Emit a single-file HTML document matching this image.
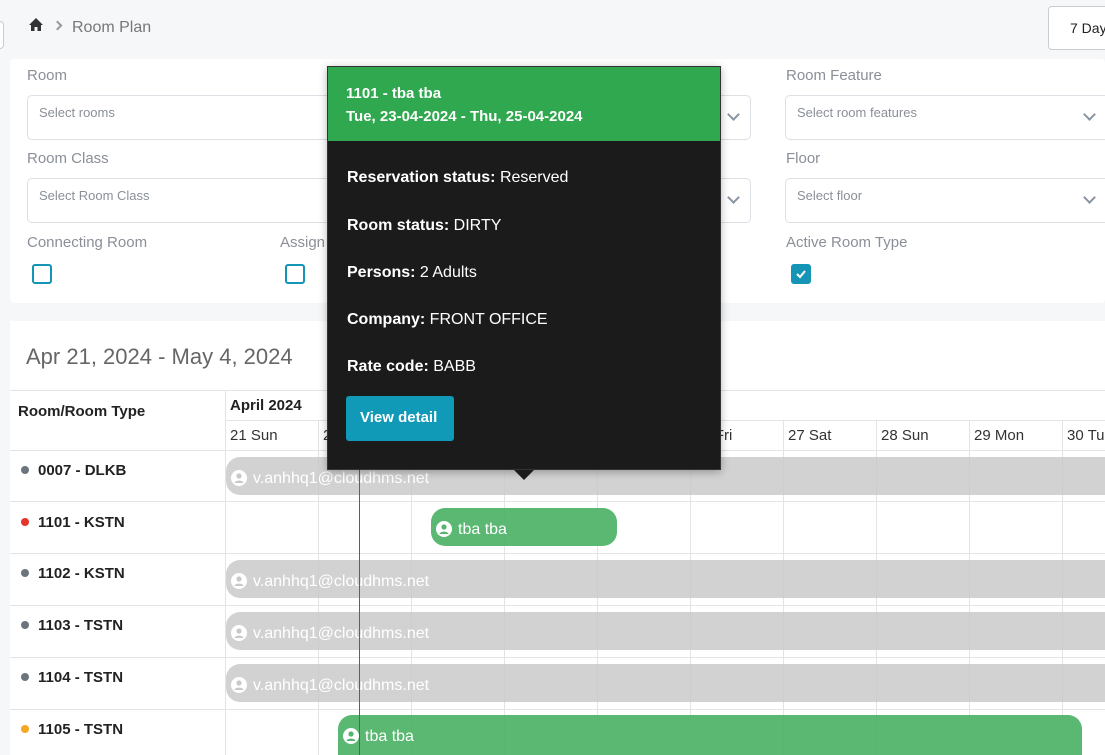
<!DOCTYPE html>
<html style="overflow:hidden;width:1105px;height:755px"><head><meta charset="utf-8"><style>
*{box-sizing:border-box;margin:0;padding:0}
body{width:1105px;height:755px;overflow:hidden;background:#f6f7f9;font-family:"Liberation Sans",sans-serif;position:relative}
.a{position:absolute}
.lbl{position:absolute;font-size:15px;color:#8a8f98}
.inp{position:absolute;height:45px;border:1px solid #dcdfe4;border-radius:5px;background:#fff;font-size:13px;color:#8a8f98;padding:9px 11px}
.chev{position:absolute;right:12px;top:14px;width:9px;height:9px;border-right:2px solid #8a94a0;border-bottom:2px solid #8a94a0;transform:rotate(45deg)}
.cb{position:absolute;width:20px;height:20px;border:2px solid #1595b5;border-radius:3px;background:#fff}
.vl{position:absolute;top:390px;width:1px;height:365px;background:#e4e4e4}
.hl{position:absolute;left:10px;width:1095px;height:1px;background:#e4e4e4}
.day{position:absolute;top:427px;font-size:15px;color:#333;white-space:nowrap}
.room{position:absolute;left:21px;font-size:15px;font-weight:bold;color:#222}
.room i{display:inline-block;width:8px;height:8px;border-radius:50%;margin-right:9px;vertical-align:1px}
.bar{position:absolute;height:38px;border-radius:14px;color:#fff;font-size:16px;line-height:38px;padding:3px 0 0 27px;white-space:nowrap;overflow:hidden}
.bar svg{position:absolute;left:5px;top:13px}
.gr{background:rgba(200,200,200,.82)}
.gn{background:rgba(76,178,102,.92)}
.tt b{font-weight:bold}
.tt p{position:absolute;left:19px;font-size:15px;color:#fff}
</style></head><body>
<div class="a" style="left:-6px;top:21px;width:10px;height:28px;border:1px solid #ccc;border-radius:4px;background:#fff"></div>
<svg class="a" style="left:28px;top:17px" width="16" height="15" viewBox="0 0 16 15"><path d="M8 1 L1 8 H3 V14 H6.5 V10 H9.5 V14 H13 V8 H15 Z" fill="#333"/></svg>
<div class="a" style="left:54px;top:22px;width:7px;height:7px;border-right:2px solid #999;border-top:2px solid #999;transform:rotate(45deg)"></div>
<div class="a" style="left:72px;top:19px;font-size:16px;color:#777">Room Plan</div>
<div class="a" style="left:1048px;top:6px;width:70px;height:44px;border:1px solid #ccc;border-radius:4px;background:#fff;font-size:14px;color:#222;padding:13px 0 0 21px;white-space:nowrap">7 Days</div>

<div class="a" style="left:10px;top:59px;width:1095px;height:244px;background:#fff;border-radius:4px"></div>
<div class="lbl" style="left:27px;top:67px">Room</div>
<div class="inp" style="left:27px;top:95px;width:350px">Select rooms</div>
<div class="inp" style="left:406px;top:95px;width:345px"><span class="chev"></span></div>
<div class="lbl" style="left:786px;top:67px">Room Feature</div>
<div class="inp" style="left:785px;top:95px;width:330px">Select room features<span class="chev" style="right:20px"></span></div>
<div class="lbl" style="left:27px;top:150px">Room Class</div>
<div class="inp" style="left:27px;top:178px;width:350px">Select Room Class</div>
<div class="inp" style="left:406px;top:178px;width:345px"><span class="chev"></span></div>
<div class="lbl" style="left:786px;top:150px">Floor</div>
<div class="inp" style="left:785px;top:178px;width:330px">Select floor<span class="chev" style="right:20px"></span></div>
<div class="lbl" style="left:27px;top:234px">Connecting Room</div>
<div class="lbl" style="left:280px;top:234px">Assign</div>
<div class="lbl" style="left:786px;top:234px">Active Room Type</div>
<div class="cb" style="left:32px;top:264px"></div>
<div class="cb" style="left:285px;top:264px"></div>
<div class="cb" style="left:791px;top:264px;background:#1595b5"><svg width="16" height="16" viewBox="0 0 16 16" style="position:absolute;left:0;top:0"><path d="M4 8 L7 11 L12 5" stroke="#fff" stroke-width="2" fill="none"/></svg></div>

<div class="a" style="left:10px;top:321px;width:1095px;height:434px;background:#fff"></div>
<div class="a" style="left:26px;top:344px;font-size:22px;color:#666;font-weight:300">Apr 21, 2024 - May 4, 2024</div>
<div class="hl" style="top:390px"></div>
<div class="a" style="left:226px;top:420px;width:879px;height:1px;background:#e4e4e4"></div>
<div class="hl" style="top:450px"></div>
<div class="hl" style="top:501px"></div>
<div class="hl" style="top:553px"></div>
<div class="hl" style="top:605px"></div>
<div class="hl" style="top:657px"></div>
<div class="hl" style="top:709px"></div>
<div class="vl" style="left:225px"></div>
<div class="vl" style="left:318px;top:420px;height:335px"></div>
<div class="vl" style="left:411px;top:420px;height:335px"></div>
<div class="vl" style="left:504px;top:420px;height:335px"></div>
<div class="vl" style="left:597px;top:420px;height:335px"></div>
<div class="vl" style="left:690px;top:420px;height:335px"></div>
<div class="vl" style="left:783px;top:420px;height:335px"></div>
<div class="vl" style="left:876px;top:420px;height:335px"></div>
<div class="vl" style="left:969px;top:420px;height:335px"></div>
<div class="vl" style="left:1062px;top:420px;height:335px"></div>
<div class="a" style="left:18px;top:403px;font-size:15px;font-weight:bold;color:#222">Room/Room Type</div>
<div class="a" style="left:230px;top:397px;font-size:15px;font-weight:bold;color:#222">April 2024</div>
<div class="day" style="left:230px">21 Sun</div>
<div class="day" style="left:323px">22 Mon</div>
<div class="day" style="left:694px">26 Fri</div>
<div class="day" style="left:788px">27 Sat</div>
<div class="day" style="left:881px">28 Sun</div>
<div class="day" style="left:974px">29 Mon</div>
<div class="day" style="left:1067px">30 Tue</div>

<div class="room" style="top:462px"><i style="background:#6c757d"></i>0007 - DLKB</div>
<div class="room" style="top:514px"><i style="background:#e8322c"></i>1101 - KSTN</div>
<div class="room" style="top:565px"><i style="background:#6c757d"></i>1102 - KSTN</div>
<div class="room" style="top:617px"><i style="background:#6c757d"></i>1103 - TSTN</div>
<div class="room" style="top:669px"><i style="background:#6c757d"></i>1104 - TSTN</div>
<div class="room" style="top:721px"><i style="background:#f5a623"></i>1105 - TSTN</div>

<div class="bar gr" style="left:226px;top:457px;width:900px"><svg width="16" height="16" viewBox="0 0 16 16"><circle cx="8" cy="8" r="8" fill="#fff"/><circle cx="8" cy="6" r="2.6" fill="#c8c8c8"/><path d="M3.3 13 C4.5 9.8 11.5 9.8 12.7 13 Z" fill="#c8c8c8"/></svg>v.anhhq1@cloudhms.net</div>
<div class="bar gn" style="left:431px;top:508px;width:186px"><svg width="16" height="16" viewBox="0 0 16 16"><circle cx="8" cy="8" r="8" fill="#fff"/><circle cx="8" cy="6" r="2.6" fill="#55b570"/><path d="M3.3 13 C4.5 9.8 11.5 9.8 12.7 13 Z" fill="#55b570"/></svg>tba tba</div>
<div class="bar gr" style="left:226px;top:560px;width:900px"><svg width="16" height="16" viewBox="0 0 16 16"><circle cx="8" cy="8" r="8" fill="#fff"/><circle cx="8" cy="6" r="2.6" fill="#c8c8c8"/><path d="M3.3 13 C4.5 9.8 11.5 9.8 12.7 13 Z" fill="#c8c8c8"/></svg>v.anhhq1@cloudhms.net</div>
<div class="bar gr" style="left:226px;top:612px;width:900px"><svg width="16" height="16" viewBox="0 0 16 16"><circle cx="8" cy="8" r="8" fill="#fff"/><circle cx="8" cy="6" r="2.6" fill="#c8c8c8"/><path d="M3.3 13 C4.5 9.8 11.5 9.8 12.7 13 Z" fill="#c8c8c8"/></svg>v.anhhq1@cloudhms.net</div>
<div class="bar gr" style="left:226px;top:664px;width:900px"><svg width="16" height="16" viewBox="0 0 16 16"><circle cx="8" cy="8" r="8" fill="#fff"/><circle cx="8" cy="6" r="2.6" fill="#c8c8c8"/><path d="M3.3 13 C4.5 9.8 11.5 9.8 12.7 13 Z" fill="#c8c8c8"/></svg>v.anhhq1@cloudhms.net</div>
<div class="bar gn" style="left:338px;top:715px;width:744px;height:40px;border-radius:14px 14px 0 0"><svg width="16" height="16" viewBox="0 0 16 16"><circle cx="8" cy="8" r="8" fill="#fff"/><circle cx="8" cy="6" r="2.6" fill="#55b570"/><path d="M3.3 13 C4.5 9.8 11.5 9.8 12.7 13 Z" fill="#55b570"/></svg>tba tba</div>
<div class="a" style="left:359px;top:390px;width:1px;height:365px;background:#1a6fc0"></div>

<div class="a tt" style="left:327px;top:66px;width:394px;height:404px;background:#1b1b1b;border:1px solid #333;box-shadow:0 2px 8px rgba(0,0,0,.3)">
<div style="height:74px;background:#30a84f;color:#fff;font-size:15px;font-weight:bold;padding:15px 0 0 18px;line-height:23px">1101 - tba tba<br>Tue, 23-04-2024 - Thu, 25-04-2024</div>
<p style="top:102px;font-size:16px"><b>Reservation status:</b> Reserved</p>
<p style="top:150px;font-size:16px"><b>Room status:</b> DIRTY</p>
<p style="top:197px;font-size:16px"><b>Persons:</b> 2 Adults</p>
<p style="top:244px;font-size:16px"><b>Company:</b> FRONT OFFICE</p>
<p style="top:291px;font-size:16px"><b>Rate code:</b> BABB</p>
<div style="position:absolute;left:18px;top:329px;width:108px;height:45px;background:#1199b8;border-radius:3px;color:#fff;font-size:15px;font-weight:bold;padding:13px 0 0 14px">View detail</div>
</div>
<div class="a" style="left:514px;top:470px;width:0;height:0;border-left:10px solid transparent;border-right:10px solid transparent;border-top:10px solid #1b1b1b"></div>
</body></html>
